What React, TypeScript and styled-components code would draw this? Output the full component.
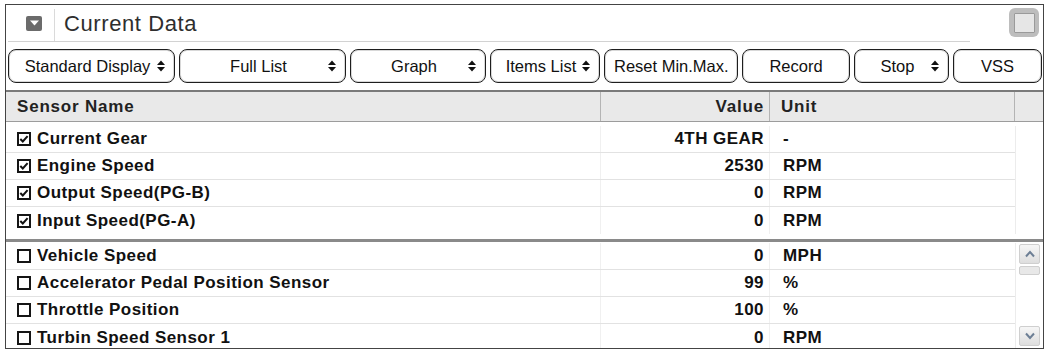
import React from "react";
import { styled, createGlobalStyle } from "styled-components";

const GlobalStyle = createGlobalStyle`
  body {
    margin: 0;
    background: #ffffff;
    font-family: "Liberation Sans", Arial, sans-serif;
  }
`;

const Window = styled.div`
  box-sizing: border-box;
  width: 1039px;
  height: 345px;
  margin: 4px 0 0 5px;
  border: 1px solid #444;
  display: flex;
  flex-direction: column;
  overflow: hidden;
  background: #fff;
`;

const TitleBar = styled.div`
  display: flex;
  align-items: flex-start;
  height: 37px;
  padding-left: 2px;
`;

const TitleMain = styled.div`
  display: flex;
  align-items: center;
  width: 962px;
  height: 36px;
  border-bottom: 1px solid #d2d2d2;
`;

const CollapseIcon = styled.div`
  width: 16px;
  height: 15px;
  margin-left: 18px;
  border-radius: 2px;
  background: #6b6b6b;
  display: flex;
  align-items: center;
  justify-content: center;
`;

const TitleDivider = styled.div`
  width: 1px;
  height: 32px;
  margin: 4px 9px 0 12px;
  align-self: flex-start;
  background: #dadada;
`;

const TitleText = styled.span`
  font-size: 22px;
  letter-spacing: 0.6px;
  color: #2e2e2e;
  margin-top: 1px;
`;

const MaxButton = styled.div`
  box-sizing: border-box;
  width: 30px;
  height: 29px;
  margin: 3px 0 0 39px;
  border-radius: 6px;
  background: #bdbdbd;
  display: flex;
  align-items: center;
  justify-content: center;
`;

const MaxInner = styled.div`
  width: 19px;
  height: 18px;
  background: #e6e6e6;
  border: 1px solid #9a9a9a;
  border-radius: 1px;
`;

const Toolbar = styled.div`
  display: flex;
  gap: 4px;
  padding: 7px 0 0 2px;
`;

const ToolButton = styled.div<{ $w: number }>`
  box-sizing: border-box;
  width: ${(p) => p.$w}px;
  height: 34px;
  border: 1px solid #1e1e1e;
  border-radius: 8px;
  box-shadow: inset 0 0 0 1px #d8d8d8;
  display: flex;
  align-items: center;
  padding: 0 9px;
  font-size: 16.5px;
  color: #111;
  background: #fff;
`;

const ButtonLabel = styled.span`
  flex: 1;
  text-align: center;
  white-space: nowrap;
`;

const Table = styled.div`
  margin-top: 7px;
  flex: 1;
  display: flex;
  flex-direction: column;
  border-top: 2px solid #7a7a7a;
  overflow: hidden;
  font-weight: bold;
  font-size: 17px;
  letter-spacing: 0.45px;
  color: #111;
`;

const cols = "595px 169px 245px 27px";

const HeaderRow = styled.div`
  display: grid;
  grid-template-columns: ${cols};
  height: 29px;
  background: #e9e9e9;
  border-bottom: 1px solid #9c9c9c;
  letter-spacing: 0.8px;
  color: #222;
`;

const HeadCell = styled.div<{ $align?: string }>`
  display: flex;
  align-items: center;
  justify-content: ${(p) => p.$align || "flex-start"};
  padding: 0 ${(p) => (p.$align === "flex-end" ? "5px" : "0")} 0
    ${(p) => (p.$align === "flex-end" ? "0" : "11px")};
  border-right: 1px solid #b4b4b4;
  &:last-child {
    border-right: none;
  }
`;

const Pane = styled.div<{ $top?: boolean }>`
  display: flex;
  ${(p) =>
    p.$top
      ? "padding: 4px 0 5px; border-bottom: 3px solid #8a8a8a;"
      : "margin-top: 1px; flex: 1; overflow: hidden;"}
`;

const Rows = styled.div`
  width: 1009px;
  display: flex;
  flex-direction: column;
`;

const Row = styled.div`
  display: grid;
  grid-template-columns: 595px 169px 245px;
  height: 27px;
  flex-shrink: 0;
  border-bottom: 1px solid #e2e2e2;
  box-sizing: border-box;
  &:last-child {
    border-bottom: none;
  }
`;

const NameCell = styled.div`
  display: flex;
  align-items: center;
  gap: 6px;
  padding-left: 11px;
  border-right: 1px solid #f0f0f0;
  white-space: nowrap;
`;

const ValueCell = styled.div`
  display: flex;
  align-items: center;
  justify-content: flex-end;
  padding-right: 5px;
  border-right: 1px solid #f0f0f0;
`;

const UnitCell = styled.div`
  display: flex;
  align-items: center;
  padding-left: 13px;
`;

const Box = styled.div`
  box-sizing: border-box;
  width: 14px;
  height: 14px;
  border: 2px solid #151515;
  display: flex;
  align-items: center;
  justify-content: center;
  flex-shrink: 0;
`;

const SideColumn = styled.div`
  width: 27px;
  border-left: 1px solid #ececec;
`;

const ScrollBar = styled.div`
  width: 27px;
  border-left: 1px solid #ececec;
  box-sizing: border-box;
  padding: 1px 2px 2px 3px;
  display: flex;
  flex-direction: column;
  gap: 2px;
`;

const ScrollArrow = styled.div`
  height: 18px;
  border: 1px solid #cfcfcf;
  border-radius: 2px;
  background: linear-gradient(#f6f6f6, #dedede);
  display: flex;
  align-items: center;
  justify-content: center;
`;

const ScrollThumb = styled.div`
  height: 7px;
  border: 1px solid #cfcfcf;
  border-radius: 2px;
  background: #e8e8e8;
`;

const ScrollTrack = styled.div`
  flex: 1;
`;

const UpDown = () => (
  <svg width="8" height="12" viewBox="0 0 8 12">
    <polygon points="0,5 4,0.5 8,5" fill="#111" />
    <polygon points="0,7 8,7 4,11.5" fill="#111" />
  </svg>
);

const Check = () => (
  <svg width="10" height="10" viewBox="0 0 10 10">
    <polyline
      points="1.3,5 3.8,7.5 8.6,2.2"
      fill="none"
      stroke="#111"
      strokeWidth="2"
    />
  </svg>
);

const Chevron = ({ up }: { up?: boolean }) => (
  <svg width="12" height="8" viewBox="0 0 12 8">
    <polyline
      points={up ? "2,6.5 6,2 10,6.5" : "2,1.5 6,6 10,1.5"}
      fill="none"
      stroke="#6d7f95"
      strokeWidth="2"
    />
  </svg>
);

const buttons = [
  { label: "Standard Display", w: 167, arrow: true },
  { label: "Full List", w: 167, arrow: true },
  { label: "Graph", w: 136, arrow: true },
  { label: "Items List", w: 110, arrow: true },
  { label: "Reset Min.Max.", w: 134, arrow: false },
  { label: "Record", w: 108, arrow: false },
  { label: "Stop", w: 95, arrow: true },
  { label: "VSS", w: 89, arrow: false },
];

const selected = [
  ["Current Gear", "4TH GEAR", "-"],
  ["Engine Speed", "2530", "RPM"],
  ["Output Speed(PG-B)", "0", "RPM"],
  ["Input Speed(PG-A)", "0", "RPM"],
];

const others = [
  ["Vehicle Speed", "0", "MPH"],
  ["Accelerator Pedal Position Sensor", "99", "%"],
  ["Throttle Position", "100", "%"],
  ["Turbin Speed Sensor 1", "0", "RPM"],
];

function SensorRow({ data, checked }: { data: string[]; checked: boolean }) {
  return (
    <Row>
      <NameCell>
        <Box>{checked && <Check />}</Box>
        {data[0]}
      </NameCell>
      <ValueCell>{data[1]}</ValueCell>
      <UnitCell>{data[2]}</UnitCell>
    </Row>
  );
}

export default function App() {
  return (
    <>
      <GlobalStyle />
      <Window>
        <TitleBar>
          <TitleMain>
            <CollapseIcon>
              <svg width="9" height="6" viewBox="0 0 9 6">
                <polygon points="0,0.5 9,0.5 4.5,5.5" fill="#fff" />
              </svg>
            </CollapseIcon>
            <TitleDivider />
            <TitleText>Current Data</TitleText>
          </TitleMain>
          <MaxButton>
            <MaxInner />
          </MaxButton>
        </TitleBar>

        <Toolbar>
          {buttons.map((b) => (
            <ToolButton key={b.label} $w={b.w}>
              <ButtonLabel>{b.label}</ButtonLabel>
              {b.arrow && <UpDown />}
            </ToolButton>
          ))}
        </Toolbar>

        <Table>
          <HeaderRow>
            <HeadCell>Sensor Name</HeadCell>
            <HeadCell $align="flex-end">Value</HeadCell>
            <HeadCell>Unit</HeadCell>
            <HeadCell />
          </HeaderRow>
          <Pane $top>
            <Rows>
              {selected.map((r) => (
                <SensorRow key={r[0]} data={r} checked />
              ))}
            </Rows>
            <SideColumn />
          </Pane>
          <Pane>
            <Rows>
              {others.map((r) => (
                <SensorRow key={r[0]} data={r} checked={false} />
              ))}
            </Rows>
            <ScrollBar>
              <ScrollArrow>
                <Chevron up />
              </ScrollArrow>
              <ScrollThumb />
              <ScrollTrack />
              <ScrollArrow>
                <Chevron />
              </ScrollArrow>
            </ScrollBar>
          </Pane>
        </Table>
      </Window>
    </>
  );
}
